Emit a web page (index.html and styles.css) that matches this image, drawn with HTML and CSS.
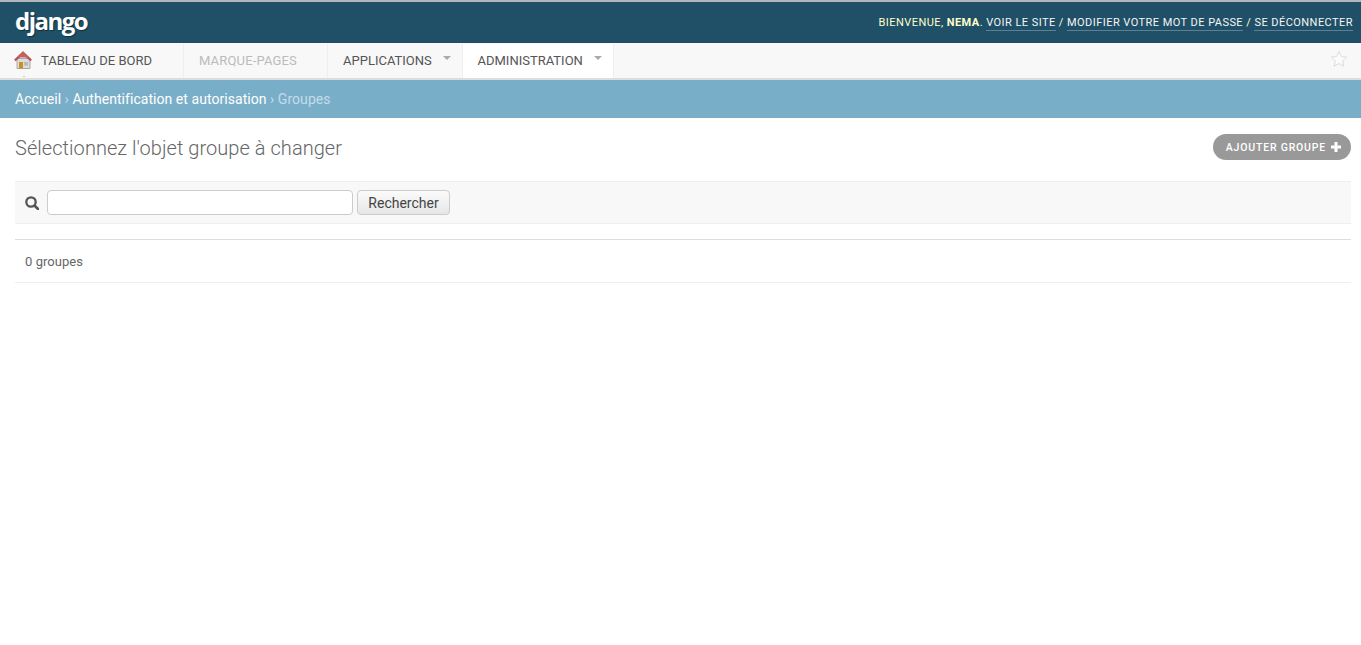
FILE: index.html
```html
<!DOCTYPE html>
<html lang="fr">
  <head>
    <title>Sélectionnez l'objet groupe à changer</title>
    <link rel="stylesheet" href="styles.css">
  </head>
  <body>
    <div id="header">
      <span class="brand">django</span>
      <div class="user-tools">
        Bienvenue, <strong>Nema</strong>.
        <a href="#">Voir le site</a> /
        <a href="#">Modifier votre mot de passe</a> /
        <a href="#">Se déconnecter</a>
      </div>
    </div>

    <div id="nav">
      <a class="nav-item nav-home" href="#">
        <svg class="home-icon" width="18" height="18" viewBox="0 0 18 18">
          <path d="M3 7.500h13V17.500H3z" fill="#dcdcd8" stroke="#a8a8a8" stroke-width="1"/>
          <path d="M5 11h4v6.500H5z" fill="#c98f2a"/>
          <path d="M10 11h4v3.500h-4z" fill="#b4babd"/>
          <path d="M.5 8.500 9 .5l8.500 8-1 1.500L9 3.500 1.500 10z" fill="#bd5250" stroke="#ab4a48" stroke-width=".5"/>
          <path d="M9 .5 3 6.500h12z" fill="#c4605d"/>
        </svg>
        Tableau de bord
      </a>
      <span class="nav-item nav-muted">Marque-pages</span>
      <a class="nav-item nav-drop" href="#">Applications<i class="caret"></i></a>
      <a class="nav-item nav-drop nav-active" href="#">Administration<i class="caret"></i></a>
      <svg class="star-icon" width="18" height="18" viewBox="0 0 18 18">
        <path d="M9 1.500l2.300 5 5.400.6-4 3.700 1.100 5.400L9 13.500l-4.800 2.700 1.100-5.400-4-3.700 5.400-.6z" fill="#fbfbfb" stroke="#ddd" stroke-width="1"/>
      </svg>
    </div>

    <div class="breadcrumbs">
      <a href="#">Accueil</a> › <a href="#">Authentification et autorisation</a> › Groupes
    </div>

    <div id="content">
      <div class="title-row">
        <h1>Sélectionnez l'objet groupe à changer</h1>
        <a class="addlink" href="#">Ajouter groupe
          <svg width="10" height="10" viewBox="0 0 10 10"><path d="M3.500 0h3v3.500H10v3H6.500V10h-3V6.500H0v-3h3.500z" fill="#fff"/></svg>
        </a>
      </div>

      <form id="toolbar">
        <svg class="search-icon" width="14" height="14" viewBox="0 0 14 14">
          <circle cx="6" cy="6" r="4.700" fill="none" stroke="#555" stroke-width="2.300"/>
          <path d="M9.500 9.500 13 13" stroke="#555" stroke-width="2.600" stroke-linecap="round"/>
        </svg>
        <input type="text">
        <button type="button">Rechercher</button>
      </form>

      <p class="paginator">0 groupes</p>
    </div>
  </body>
</html>
```

FILE: styles.css
```css
body {
  margin: 0;
  font-family: Roboto, "Liberation Sans", sans-serif;
  font-size: 14px;
  color: #666;
  background: #fff;
}
a {
  text-decoration: none;
}
#header {
  display: flex;
  justify-content: space-between;
  align-items: center;
  box-sizing: border-box;
  height: 43px;
  padding: 0 8px 0 15px;
  background: #205067;
  border-top: 2px solid #b4b8ba;
}
.brand {
  font-family: "Open Sans", sans-serif;
  font-size: 24px;
  font-weight: 700;
  letter-spacing: -1.500px;
  line-height: 36px;
  margin-bottom: 4px;
  color: #fff;
  text-shadow: 1px 1px 1px #10303f;
}
.user-tools {
  font-size: 11px;
  letter-spacing: .45px;
  text-transform: uppercase;
  color: #ffc;
}
.user-tools strong {
  font-weight: 700;
}
.user-tools a {
  color: #f5f5f5;
  border-bottom: 1px solid #5d8194;
  padding-bottom: 1px;
}
#nav {
  display: flex;
  align-items: stretch;
  box-sizing: border-box;
  height: 37px;
  background: #f8f8f8;
  border-bottom: 2px solid #ddd;
}
.nav-item {
  display: flex;
  align-items: center;
  position: relative;
  box-sizing: border-box;
  margin-top: 1px;
  padding-bottom: 2px;
  font-size: 13px;
  text-transform: uppercase;
  color: #555;
  border-right: 1px solid #eee;
}
.nav-home {
  width: 184px;
  padding-left: 14px;
}
.home-icon {
  margin-right: 9px;
  margin-bottom: 1px;
}
.nav-home::after {
  content: "";
  position: absolute;
  left: 23px;
  bottom: 1px;
  width: 2px;
  height: 1px;
  background: #fc3;
}
.nav-muted {
  width: 144px;
  padding-left: 15px;
  letter-spacing: .16px;
  color: #bbb;
}
.nav-drop {
  width: 135px;
  padding-left: 15px;
}
.nav-active {
  width: 151px;
  padding-left: 14.500px;
  background: #fff;
}
.caret {
  position: absolute;
  right: 11px;
  top: 12px;
  border-left: 4px solid transparent;
  border-right: 4px solid transparent;
  border-top: 4px solid #aaa;
}
.star-icon {
  margin: 7px 13px 0 auto;
}
.breadcrumbs {
  box-sizing: border-box;
  height: 38px;
  padding: 0 15px;
  line-height: 39px;
  font-size: 14px;
  letter-spacing: .05px;
  color: #c4dce8;
  background: #79aec8;
}
.breadcrumbs a {
  color: #fff;
}
#content {
  padding: 0 10px 0 15px;
}
.title-row {
  display: flex;
  justify-content: space-between;
  align-items: flex-start;
  height: 63px;
}
h1 {
  margin: 17px 0 0;
  font-size: 20px;
  font-weight: 300;
  letter-spacing: .05px;
  line-height: 26px;
  color: #666;
}
.addlink {
  display: flex;
  align-items: center;
  gap: 5px;
  box-sizing: border-box;
  height: 26px;
  margin-top: 16px;
  padding: 0 10px 0 13px;
  border-radius: 13px;
  background: #999;
  color: #fff;
  font-size: 10.500px;
  font-weight: 500;
  letter-spacing: .8px;
  text-transform: uppercase;
}
#toolbar {
  display: flex;
  align-items: center;
  box-sizing: border-box;
  height: 43px;
  padding: 0 10px;
  background: #f8f8f8;
  border-top: 1px solid #eee;
  border-bottom: 1px solid #eee;
}
.search-icon {
  margin-right: 8px;
}
#toolbar input {
  box-sizing: border-box;
  width: 306px;
  height: 25px;
  margin: 0 4px 0 0;
  background: #fff;
  border: 1px solid #ccc;
  border-radius: 4px;
}
#toolbar button {
  box-sizing: border-box;
  width: 93px;
  height: 25px;
  padding: 0;
  font-family: Roboto, sans-serif;
  font-size: 14px;
  color: #444;
  background: linear-gradient(#fbfbfb, #e6e6e6);
  border: 1px solid #ccc;
  border-radius: 4px;
}
.paginator {
  box-sizing: border-box;
  height: 44px;
  margin: 15px 0 0;
  padding: 0 10px;
  line-height: 43px;
  font-size: 13px;
  letter-spacing: .05px;
  color: #666;
  border-top: 1px solid #ddd;
  border-bottom: 1px solid #eee;
}
```
